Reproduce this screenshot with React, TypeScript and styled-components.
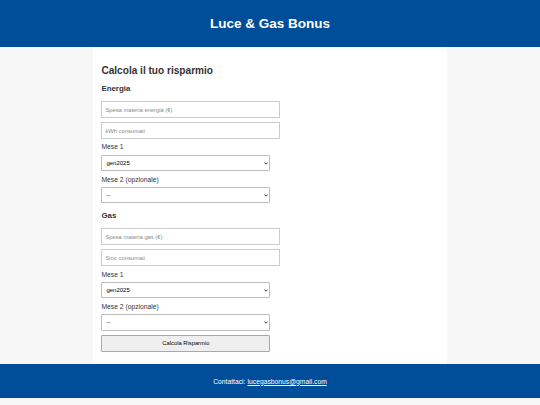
import React from 'react';
import styled, { createGlobalStyle } from 'styled-components';

const GlobalStyle = createGlobalStyle`
  body {
    margin: 0;
    background-color: #f7f7f7;
    font-family: "Liberation Sans", Arial, sans-serif;
    color: #333;
  }
`;

const Header = styled.header`
  display: flex;
  align-items: center;
  justify-content: center;
  height: 47px;
  background-color: #004d99;
  color: white;
`;

const Title = styled.h1`
  margin: 0;
  font-size: 13.5px;
  font-weight: bold;
`;

const Container = styled.main`
  box-sizing: border-box;
  width: 354px;
  margin: 0 auto;
  padding: 9.4px 8.4px 8.4px;
  background-color: white;
`;

const Heading = styled.h2`
  margin: 8.4px 0;
  font-size: 10.1px;
  font-weight: bold;
  color: #333;
`;

const Section = styled.h3`
  margin: 7.9px 0;
  font-size: 7.9px;
  font-weight: bold;
  color: #333;
`;

const Input = styled.input`
  display: block;
  box-sizing: border-box;
  width: 179px;
  height: 17px;
  margin: 0 0 4.2px;
  padding: 0 3px;
  border: 1px solid #ccc;
  font-family: "Liberation Sans", Arial, sans-serif;
  font-size: 5.8px;
  color: #333;
  outline: none;

  &::placeholder {
    color: #8a8a8a;
  }
`;

const Label = styled.label`
  display: block;
  margin-bottom: 3.6px;
  font-size: 6.75px;
  line-height: 7.8px;
  color: #333;
`;

const SelectWrap = styled.div`
  position: relative;
  width: 169px;
  margin: 0 0 4.2px;
`;

const Select = styled.select`
  display: block;
  box-sizing: border-box;
  width: 100%;
  height: 16.5px;
  margin: 0;
  padding: 0 10px 0 4px;
  border: 1px solid #bdbdbd;
  border-radius: 1px;
  background-color: white;
  appearance: none;
  font-family: "Liberation Sans", Arial, sans-serif;
  font-size: 6px;
  color: #000;
  outline: none;
`;

const Chevron = styled.svg`
  position: absolute;
  right: 2.5px;
  top: 50%;
  width: 4px;
  height: 3px;
  margin-top: -1.5px;
  pointer-events: none;
`;

const Button = styled.button`
  display: block;
  box-sizing: border-box;
  width: 169px;
  height: 17px;
  margin: 0 0 4.2px;
  padding: 0;
  border: 1px solid #a8a8a8;
  border-radius: 1px;
  background-color: #efefef;
  font-family: "Liberation Sans", Arial, sans-serif;
  font-size: 5.8px;
  color: #000;
`;

const Footer = styled.footer`
  display: flex;
  align-items: center;
  justify-content: center;
  height: 33.5px;
  background-color: #004d99;
  color: white;
  font-size: 6.75px;

  a {
    color: white;
    margin-left: 2px;
  }
`;

const months = ['gen2025', 'feb2025', 'mar2025'];

const MonthSelect: React.FC<{ optional?: boolean }> = ({ optional }) => (
  <SelectWrap>
    <Select defaultValue={optional ? '' : 'gen2025'}>
      {optional && <option value="">--</option>}
      {months.map(m => (
        <option key={m} value={m}>{m}</option>
      ))}
    </Select>
    <Chevron viewBox="0 0 4 3">
      <path d="M0.4 0.5 L2 2.3 L3.6 0.5" fill="none" stroke="#333" strokeWidth="0.9" />
    </Chevron>
  </SelectWrap>
);

interface BlockProps {
  name: string;
  spesa: string;
  consumo: string;
}

const UtilityBlock: React.FC<BlockProps> = ({ name, spesa, consumo }) => (
  <>
    <Section>{name}</Section>
    <Input placeholder={spesa} />
    <Input placeholder={consumo} />
    <Label>Mese 1</Label>
    <MonthSelect />
    <Label>Mese 2 (opzionale)</Label>
    <MonthSelect optional />
  </>
);

const App: React.FC = () => {
  return (
    <>
      <GlobalStyle />
      <Header>
        <Title>Luce &amp; Gas Bonus</Title>
      </Header>
      <Container>
        <Heading>Calcola il tuo risparmio</Heading>
        <UtilityBlock name="Energia" spesa="Spesa materia energia (€)" consumo="kWh consumati" />
        <UtilityBlock name="Gas" spesa="Spesa materia gas (€)" consumo="Smc consumati" />
        <Button>Calcola Risparmio</Button>
      </Container>
      <Footer>
        Contattaci: <a href="mailto:lucegasbonus@gmail.com">lucegasbonus@gmail.com</a>
      </Footer>
    </>
  );
};

export default App;
